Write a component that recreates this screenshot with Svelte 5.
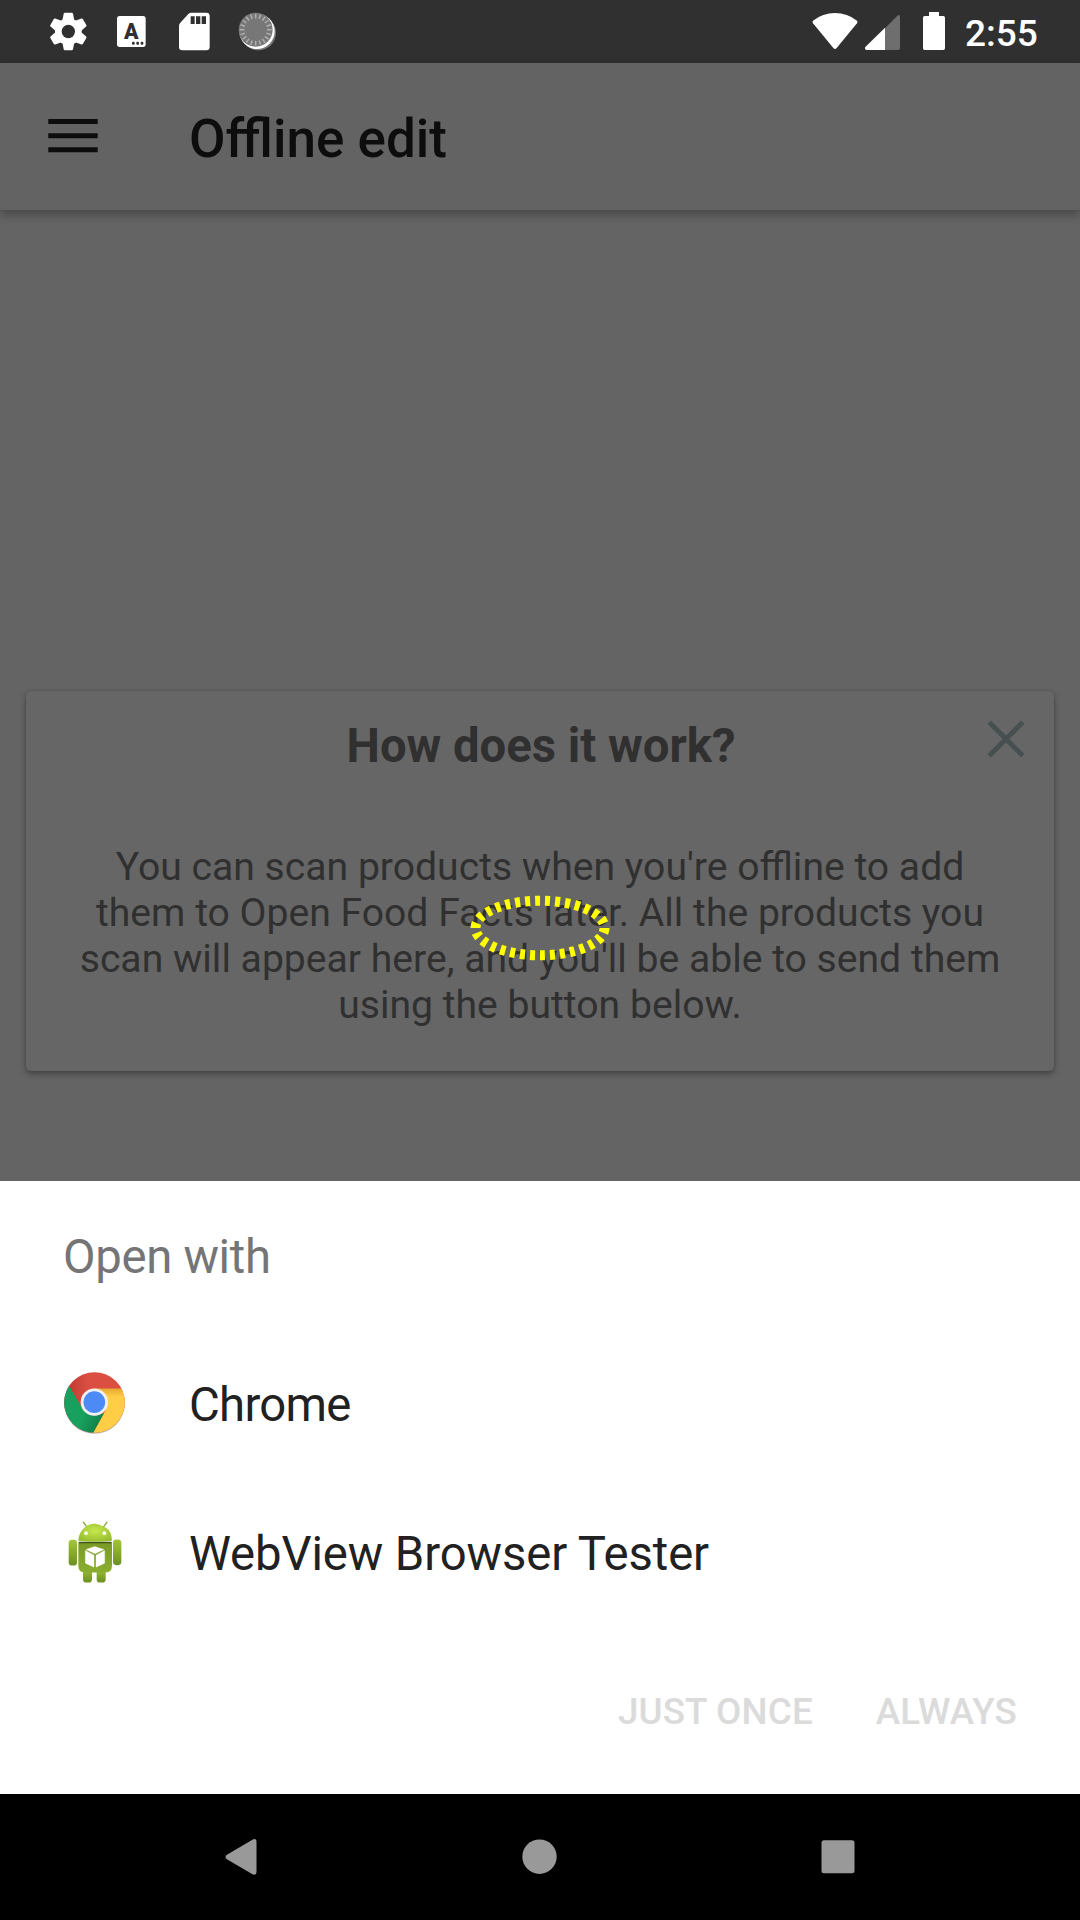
<script>
  const apps = [
    { id: 'chrome', name: 'Chrome' },
    { id: 'webview', name: 'WebView Browser Tester' }
  ];
  // Tick marks around the sync spinner
  const ticks = Array.from({ length: 20 }, (_, i) => i * 18);
</script>

<div class="screen">
  <header class="status">
    <div class="status-left">
      <svg class="gear" width="39" height="63" viewBox="57 0 117 189">
        <g fill="#fff">
          <circle cx="115" cy="94.5" r="40" />
          {#each [0, 60, 120, 180, 240, 300] as a}
            <path transform="rotate({a} 115 94.5)" d="M97 62L101 41Q102 38 105 38H125Q128 38 129 41L133 62Z" />
          {/each}
        </g>
        <circle cx="115" cy="94.5" r="20" fill="#303030" />
      </svg>
      <svg class="lang" width="29" height="63" viewBox="261 0 87 189">
        <rect x="261" y="48" width="86" height="93" rx="8" fill="#fff" />
        <text x="304" y="116" text-anchor="middle" font-size="64" font-weight="900" fill="#303030">A</text>
        <g fill="#303030">
          <rect x="306" y="125" width="8" height="9" rx="3" />
          <rect x="319" y="125" width="8" height="9" rx="3" />
          <rect x="332" y="125" width="8" height="9" rx="3" />
        </g>
      </svg>
      <svg class="card-icon" width="31" height="63" viewBox="447 0 93 189">
        <path d="M483 38H529Q539 38 539 48V141Q539 151 529 151H457Q447 151 447 141V77Q447 72 451 68L475 42Q479 38 483 38Z" fill="#fff" />
        <path d="M482 49H494V72H482ZM498 49H511V72H498ZM515 49H528V72H515Z" fill="#303030" />
      </svg>
      <svg class="sync" width="39" height="63" viewBox="624 0 117 189">
        <circle cx="685" cy="98" r="53" fill="#777" />
        <circle cx="681" cy="94" r="53" fill="#fff" />
        <circle cx="677" cy="89" r="51" fill="#777" />
        {#each ticks as t}
          <path transform="rotate({t} 677 89)" d="M677 41V55" stroke="#b0b0b0" stroke-width="4.5" />
        {/each}
      </svg>
    </div>
    <div class="status-right">
      <svg width="46" height="63" viewBox="66 0 138 189">
        <path d="M69 62Q98 39 135 39T201 62Q204 66 201 70L140 144Q135 150 130 144L69 70Q66 66 69 62Z" fill="#fff" />
      </svg>
      <svg class="cell" width="35" height="63" viewBox="225 0 105 189">
        <path d="M285 150V85L322 47Q330 42 330 51V144Q330 150 324 150Z" fill="#6e6e6e" />
        <path d="M285 83V150H229Q222 148 226 141Z" fill="#fff" />
      </svg>
      <svg class="battery" width="22" height="63" viewBox="399 0 66 189">
        <path d="M417 36H447V48H460Q465 48 465 53V145Q465 150 460 150H404Q399 150 399 145V53Q399 48 404 48H417Z" fill="#fff" />
      </svg>
      <span class="clock">2:55</span>
    </div>
  </header>

  <nav class="toolbar">
    <svg class="menu" width="50" height="34" viewBox="0 0 50 34">
      <path d="M.3 0H49.7V5H.3ZM.3 14.2H49.7V19.2H.3ZM.3 28.3H49.7V33.3H.3Z" fill="#0d0d0d" />
    </svg>
    <h1>Offline edit</h1>
  </nav>

  <main>
    <section class="card">
      <h2>How does it work?</h2>
      <p>
        You can scan products when you're offline to add<br />them to Open Food Facts later. All the products you<br />scan will appear here, and you'll be able to send them<br />using the button below.
      </p>
      <svg class="close" width="38" height="38" viewBox="0 0 38 38">
        <path d="M2.2 2.2L35.8 35.8M35.8 2.2L2.2 35.8" stroke="#465050" stroke-width="4.8" />
      </svg>
      <svg class="ring" width="140" height="66" viewBox="0 0 140 66">
        <ellipse cx="70" cy="33" rx="64.5" ry="27.3" fill="none" stroke="#ff0" stroke-width="10" stroke-dasharray="5 5" />
      </svg>
    </section>
  </main>

  <section class="sheet">
    <h3>Open with</h3>
    <ul>
      {#each apps as app}
        <li>
          {#if app.id === 'chrome'}
            <svg width="63" height="66" viewBox="69 64.5 189 198">
              <defs>
                <clipPath id="disc"><circle cx="163.500" cy="156" r="91" /></clipPath>
                <linearGradient id="redShade" x1="0" y1="0" x2="1" y2="0">
                  <stop offset="0" stop-color="#b8382e" /><stop offset=".4" stop-color="#db4f43" />
                </linearGradient>
                <linearGradient id="greenShade" gradientUnits="userSpaceOnUse" x1="186" y1="210" x2="135" y2="185">
                  <stop offset="0" stop-color="#128049" /><stop offset="1" stop-color="#17a05e" />
                </linearGradient>
                <linearGradient id="yellowShade" x1="0" y1="0" x2="0" y2="1">
                  <stop offset="0" stop-color="#e5a82f" /><stop offset=".18" stop-color="#ffcd46" />
                </linearGradient>
              </defs>
              <circle cx="163.500" cy="159" r="91" fill="#bbb" />
              <g clip-path="url(#disc)">
                <rect x="70" y="60" width="190" height="190" fill="url(#redShade)" />
                <path d="M163 114H260V250H157L198 177Z" fill="url(#yellowShade)" />
                <path d="M87 105L129 177L163 196L192 188L158 250H60V105Z" fill="url(#greenShade)" />
              </g>
              <circle cx="163" cy="155" r="41" fill="#f1f1f1" />
              <circle cx="163" cy="155" r="32.500" fill="#4c8bf5" />
            </svg>
          {:else}
            <svg width="63" height="66" viewBox="69 511.500 189 198">
              <defs>
                <linearGradient id="limb" x1="0" y1="0" x2="0" y2="1">
                  <stop offset="0" stop-color="#a4c639" /><stop offset="1" stop-color="#6b8f23" />
                </linearGradient>
                <linearGradient id="torso" x1="0" y1="0" x2="0" y2="1">
                  <stop offset="0" stop-color="#799a26" /><stop offset="1" stop-color="#8aad31" />
                </linearGradient>
                <radialGradient id="head" cx=".5" cy=".4" r=".65">
                  <stop offset="0" stop-color="#c6e84c" /><stop offset="1" stop-color="#95bd2d" />
                </radialGradient>
              </defs>
              <path d="M130 515L141 530M201 515L190 530" stroke="#8aa63a" stroke-width="4" stroke-linecap="round" />
              <g fill="url(#limb)">
                <rect x="129" y="650" width="27" height="46" rx="10" />
                <rect x="170" y="650" width="27" height="46" rx="10" />
                <rect x="86" y="568" width="25" height="77" rx="10" />
                <rect x="219" y="567" width="25" height="77" rx="10" />
              </g>
              <path d="M115 575H216V646Q216 666 196 666H135Q115 666 115 646Z" fill="url(#torso)" />
              <path d="M117 576H214" stroke="#405314" stroke-width="4" />
              <path d="M115 571Q116 546 133 532T165.500 520T198 532T216 571Q165 577 115 571Z" fill="url(#head)" />
              <circle cx="138" cy="548" r="5.500" fill="#fff" />
              <circle cx="193" cy="548" r="5.500" fill="#fff" />
              <path d="M136 600L162 614V650L136 638ZM138 597L164 588L192 597L165 610ZM168 614L194 600V638L168 650Z" fill="#fff" stroke="#fff" stroke-width="1" stroke-linejoin="round" />
            </svg>
          {/if}
          <span class={app.id}>{app.name}</span>
        </li>
      {/each}
    </ul>
    <div class="actions">
      <span>JUST ONCE</span>
      <span>ALWAYS</span>
    </div>
  </section>

  <footer>
    <svg width="32" height="36" viewBox="0 0 32 36">
      <path d="M27 1Q31.500-1.500 31.500 3V33Q31.500 37 27 35L1.500 20Q-.5 18 1.500 16Z" fill="#999" />
    </svg>
    <svg width="35" height="36" viewBox="0 0 35 36"><circle cx="17.500" cy="17.700" r="17.200" fill="#999" /></svg>
    <svg width="34" height="36" viewBox="0 0 34 36"><rect x=".5" y="1.300" width="33" height="33" rx="2.500" fill="#999" /></svg>
  </footer>
</div>

<style>
  :global(body) {
    margin: 0;
  }
  .screen {
    width: 1080px;
    height: 1920px;
    display: flex;
    flex-direction: column;
    overflow: hidden;
    background: #636363;
    font-family: Roboto, sans-serif;
  }
  svg {
    display: block;
    flex: none;
  }
  h1, h2, h3, p, ul {
    margin: 0;
    padding: 0;
    font-weight: 400;
  }
  .status {
    height: 63px;
    flex: none;
    display: flex;
    justify-content: space-between;
    background: #303030;
  }
  .status-left {
    display: flex;
    padding-left: 49px;
  }
  .lang {
    margin-left: 29px;
  }
  .card-icon {
    margin-left: 33px;
  }
  .sync {
    margin-left: 28px;
  }
  .status-right {
    display: flex;
    width: 268px;
  }
  .cell {
    margin-left: 7px;
  }
  .battery {
    margin-left: 23px;
  }
  .clock {
    margin-left: 20px;
    padding-top: 3px;
    font-size: 37px;
    line-height: 62px;
    font-weight: 500;
    color: #fff;
  }
  .toolbar {
    height: 147px;
    flex: none;
    display: flex;
    align-items: flex-start;
    background: #636363;
    box-shadow: 0 4px 10px rgba(0, 0, 0, 0.32);
    z-index: 1;
  }
  .menu {
    margin: 56px 0 0 48px;
  }
  h1 {
    margin: 46px 0 0 91px;
    font-size: 53px;
    line-height: 60px;
    font-weight: 500;
    color: #0d0d0d;
  }
  main {
    flex: 1;
    padding: 481px 26px 0;
    background: #646464;
  }
  .card {
    position: relative;
    box-sizing: border-box;
    height: 380px;
    padding-top: 27px;
    border-radius: 5px;
    background: #666;
    box-shadow: 0 3px 6px rgba(0, 0, 0, 0.32), 0 0 2px rgba(0, 0, 0, 0.15);
    text-align: center;
    color: #303030;
  }
  h2 {
    padding-left: 2px;
    font-size: 47.25px;
    line-height: 56px;
    font-weight: 700;
  }
  p {
    margin-top: 70px;
    font-size: 39.13px;
    line-height: 46px;
    white-space: nowrap;
  }
  .close {
    position: absolute;
    top: 29px;
    right: 29px;
  }
  .ring {
    position: absolute;
    top: 204px;
    left: 444px;
  }
  .sheet {
    box-sizing: border-box;
    height: 613px;
    flex: none;
    padding: 48px 63px 0;
    background: #fff;
  }
  h3 {
    font-size: 47.25px;
    line-height: 56px;
    letter-spacing: -0.3px;
    color: #757575;
  }
  ul {
    margin-top: 45px;
    list-style: none;
  }
  li {
    height: 149px;
    display: flex;
    align-items: center;
    gap: 63px;
    font-size: 47.25px;
    color: #212121;
  }
  .chrome {
    letter-spacing: -0.7px;
  }
  .webview {
    letter-spacing: -0.1px;
  }
  .actions {
    display: flex;
    justify-content: flex-end;
    gap: 63px;
    margin-top: 62px;
    font-size: 36.75px;
    line-height: 44px;
    font-weight: 500;
    letter-spacing: 0.15px;
    color: #dbdbdb;
  }
  footer {
    height: 126px;
    flex: none;
    box-sizing: border-box;
    display: flex;
    justify-content: space-between;
    padding: 45px 225px 0;
    background: #000;
  }
</style>
